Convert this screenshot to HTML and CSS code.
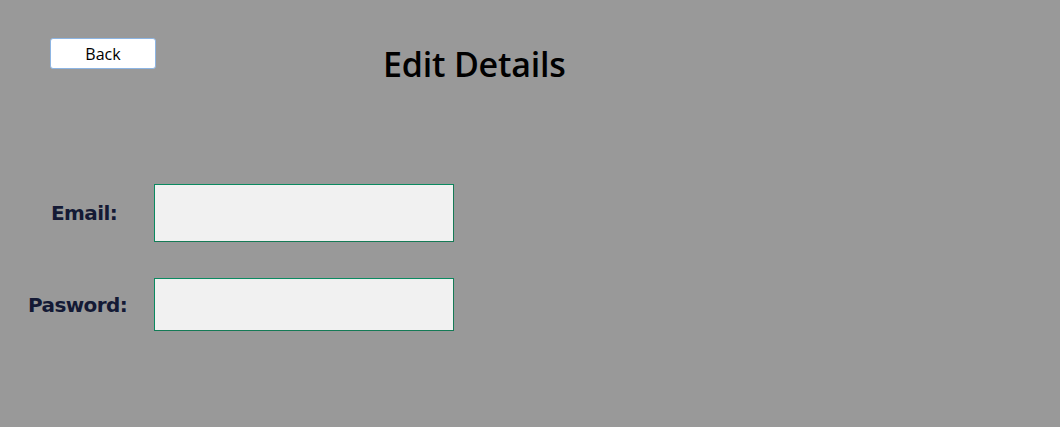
FILE: index.html
```html
<!DOCTYPE html>
<html>
<head>
<meta charset="utf-8">
<link rel="stylesheet" href="styles.css">
</head>
<body>
<div class="page">
  <header class="header">
    <button class="back">Back</button>
    <h1 class="title">Edit Details</h1>
  </header>
  <form class="form">
    <div class="row row-email">
      <label class="label label-email">Email:</label>
      <input class="field field-email" type="text">
    </div>
    <div class="row row-pass">
      <label class="label label-pass">Pasword:</label>
      <input class="field field-pass" type="password">
    </div>
  </form>
</div>
</body>
</html>
```
FILE: styles.css
```css
html, body {
  margin: 0;
  padding: 0;
  background: #999999;
  width: 1060px;
  height: 427px;
  overflow: hidden;
}
.page {
  display: flex;
  flex-direction: column;
}
.header {
  display: flex;
  align-items: flex-start;
  padding: 38px 0 0 50px;
}
.back {
  width: 106px;
  height: 31px;
  box-sizing: border-box;
  background: #ffffff;
  border: 1px solid #8db5e3;
  border-radius: 3px;
  font-family: "Open Sans", "Noto Sans", sans-serif;
  font-size: 16px;
  color: #000;
  padding: 0;
}
.title {
  margin: 4px 0 0 227px;
  font-family: "Open Sans", "Noto Sans", sans-serif;
  font-weight: 600;
  font-size: 34px;
  line-height: 44px;
  color: #000;
  letter-spacing: -0.2px;
}
.form {
  display: flex;
  flex-direction: column;
  margin-top: 98px;
}
.row {
  display: flex;
  align-items: center;
}
.row-pass {
  margin-top: 36px;
}
.label {
  width: 154px;
  box-sizing: border-box;
  font-family: "DejaVu Sans", Verdana, sans-serif;
  font-weight: bold;
  font-size: 20px;
  color: #141a35;
  letter-spacing: -0.6px;
}
.label-email { padding-left: 51px; }
.label-pass { padding-left: 28px; }
.field {
  width: 300px;
  box-sizing: border-box;
  background: #f1f1f1;
  border: 1px solid #0b8a60;
  border-right-color: #157a56;
  border-bottom-color: #157a56;
  margin: 0;
  padding: 0;
  outline: none;
}
.field-email { height: 58px; }
.field-pass { height: 53px; }
```
